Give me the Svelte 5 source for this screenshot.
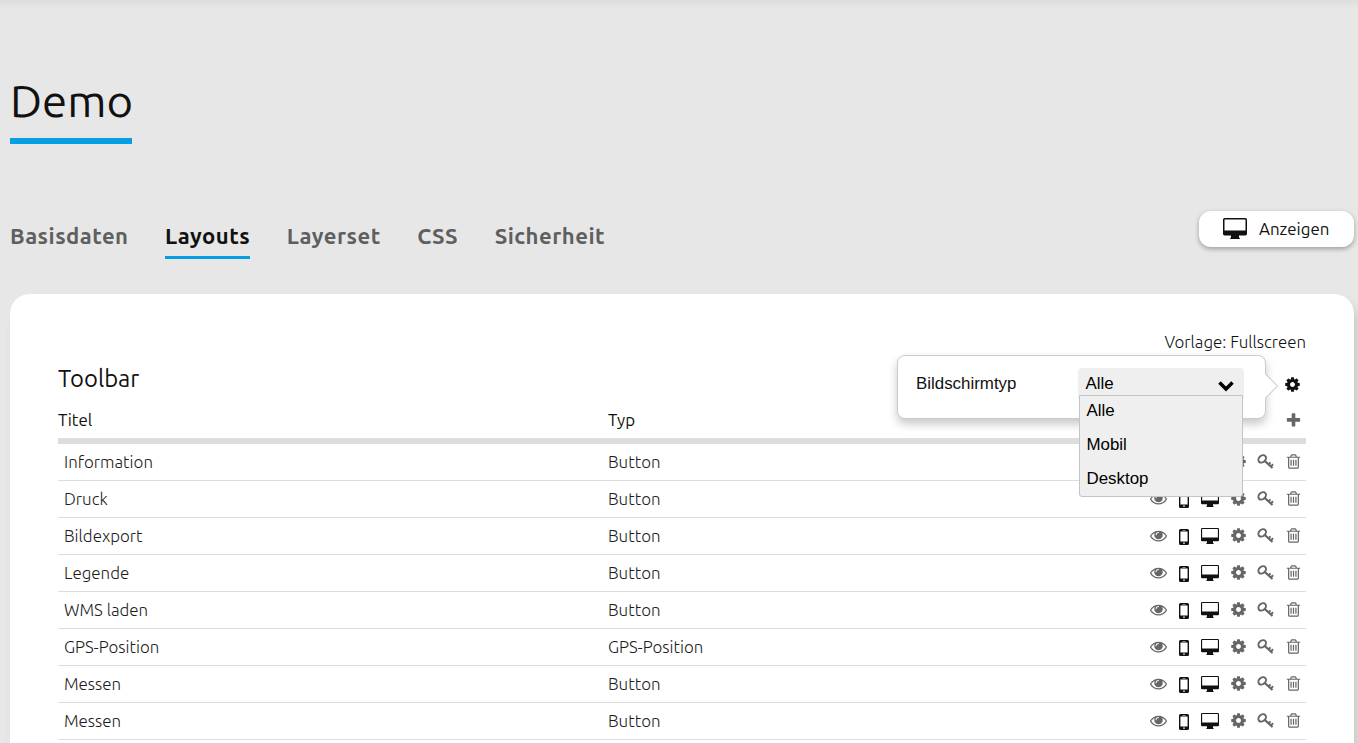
<script>
  const tabs = [
    { label: 'Basisdaten' },
    { label: 'Layouts', active: true },
    { label: 'Layerset' },
    { label: 'CSS' },
    { label: 'Sicherheit' }
  ];
  const rows = [
    ['Information', 'Button'],
    ['Druck', 'Button'],
    ['Bildexport', 'Button'],
    ['Legende', 'Button'],
    ['WMS laden', 'Button'],
    ['GPS-Position', 'GPS-Position'],
    ['Messen', 'Button'],
    ['Messen', 'Button']
  ];
  const options = ['Alle', 'Mobil', 'Desktop'];
  const cog = 'M1152 896q0-106-75-181t-181-75-181 75-75 181 75 181 181 75 181-75 75-181zm512-109v222q0 12-8 23t-20 13l-185 28q-19 54-39 91 35 50 107 138 10 12 10 25t-9 23q-27 37-99 108t-94 71q-12 0-26-9l-138-108q-44 23-91 38-16 136-29 186-7 28-36 28h-222q-14 0-24.5-8.5t-11.5-21.5l-28-184q-49-16-90-37l-141 107q-10 9-25 9-14 0-25-11-126-114-165-168-7-10-7-23 0-12 8-23 15-21 51-66.5t54-70.5q-27-50-41-99l-183-27q-13-2-21-12.5t-8-23.5v-222q0-12 8-23t19-13l186-28q14-46 39-92-40-57-107-138-10-12-10-24 0-10 9-23 26-36 98.5-107.5t94.5-71.5q13 0 26 10l138 107q44-23 91-38 16-136 29-186 7-28 36-28h222q14 0 24.5 8.5t11.5 21.5l28 184q49 16 90 37l142-107q9-9 24-9 13 0 25 10 129 119 165 170 7 8 7 22 0 12-8 23-15 21-51 66.5t-54 70.5q26 50 41 98l183 28q13 2 21 12.5t8 23.5z';
  const eye = 'M1664 960q-152-236-381-353 61 104 61 225 0 185-131.5 316.5t-316.5 131.5-316.5-131.5-131.5-316.5q0-121 61-225-229 117-381 353 133 205 333.5 326.5t434.5 121.5 434.5-121.5 333.5-326.5zm-720-384q0-20-14-34t-34-14q-125 0-214.5 89.5t-89.5 214.5q0 20 14 34t34 14 34-14 14-34q0-86 61-147t147-61q20 0 34-14t14-34zm848 384q0 34-20 69-140 230-376.5 368.5t-499.5 138.5-499.5-139-376.5-368q-20-35-20-69t20-69q140-229 376.5-368t499.5-139 499.5 139 376.5 368q20 35 20 69z';
  const trash = 'M704 736v576q0 14-9 23t-23 9h-64q-14 0-23-9t-9-23v-576q0-14 9-23t23-9h64q14 0 23 9t9 23zm256 0v576q0 14-9 23t-23 9h-64q-14 0-23-9t-9-23v-576q0-14 9-23t23-9h64q14 0 23 9t9 23zm256 0v576q0 14-9 23t-23 9h-64q-14 0-23-9t-9-23v-576q0-14 9-23t23-9h64q14 0 23 9t9 23zm128 724v-948h-896v948q0 22 7 40.5t14.5 27 10.5 8.5h832q3 0 10.5-8.5t14.5-27 7-40.5zm-672-1076h448l-48-117q-7-9-17-11h-317q-10 2-17 11zm928 32v64q0 14-9 23t-23 9h-96v948q0 83-47 143.5t-113 60.5h-832q-66 0-113-58.5t-47-141.5v-952h-96q-14 0-23-9t-9-23v-64q0-14 9-23t23-9h309l70-167q15-37 54-63t79-26h320q40 0 79 26t54 63l70 167h309q14 0 23 9t9 23z';
  const plus = 'M1600 736v192q0 40-28 68t-68 28h-416v416q0 40-28 68t-68 28h-192q-40 0-68-28t-28-68v-416h-416q-40 0-68-28t-28-68v-192q0-40 28-68t68-28h416v-416q0-40 28-68t68-28h192q40 0 68 28t28 68v416h416q40 0 68 28t28 68z';
</script>

{#snippet glyph(d)}
  <svg width="17" height="17" viewBox="0 0 1792 1792" fill="currentColor"><path {d} /></svg>
{/snippet}

{#snippet monitor(w, h)}
  <svg width={w} height={h} viewBox="0 0 24 20" preserveAspectRatio="none" fill="#111">
    <path fill-rule="evenodd" d="M1.500 0h21Q24 0 24 1.500v13.600q0 1.500-1.500 1.500H16v1.900l.8.6v.9H7.200v-.9l.8-.6v-1.900H1.500Q0 16.600 0 15.100V1.500Q0 0 1.500 0zM1.500 1.400V12h21V1.400z" />
  </svg>
{/snippet}

<main>
  <h1>Demo</h1>
  <div class="bar">
    <nav>
      {#each tabs as t}
        <a class:active={t.active}>{t.label}</a>
      {/each}
    </nav>
    <button class="show">{@render monitor(24, 21)}<span>Anzeigen</span></button>
  </div>

  <section class="card">
    <div class="template">Vorlage: Fullscreen</div>
    <div class="heading">
      <h2>Toolbar</h2>
      <span class="settings">{@render glyph(cog)}</span>
      <div class="popover">
        <label for="screen">Bildschirmtyp</label>
        <div class="select" id="screen">
          <span>Alle</span>
          <svg width="16" height="11" viewBox="0 0 16 11" fill="none" stroke="#000" stroke-width="3.500"><path d="M1.500 1.500 8 8l6.500-6.500" /></svg>
          <ul>
            {#each options as o}<li>{o}</li>{/each}
          </ul>
        </div>
        <svg class="arrow" width="14" height="28" viewBox="0 0 14 28"><path d="M0 1.500 12.500 14 0 26.500" fill="#fff" stroke="#bbb" /></svg>
      </div>
    </div>
    <div class="thead">
      <span>Titel</span><span>Typ</span>
      <span class="add">{@render glyph(plus)}</span>
    </div>
    {#each rows as r}
      <div class="row">
        <span class="title">{r[0]}</span>
        <span>{r[1]}</span>
        <div class="icons">
          <i>{@render glyph(eye)}</i>
          <i class="phone">
            <svg width="10" height="16" viewBox="0 0 10 16" fill="#111"><path fill-rule="evenodd" d="M1.500 0h7Q10 0 10 1.500v13q0 1.500-1.500 1.500h-7Q0 16 0 14.500v-13Q0 0 1.500 0zM1.400 2.600v9.800h7.200V2.600zM3.500 1v.6h3V1zM4.200 13.500v1.300h1.600v-1.300z" /></svg>
          </i>
          <i>{@render monitor(18, 16)}</i>
          <i>{@render glyph(cog)}</i>
          <i>
            <svg width="17" height="15" viewBox="0 0 17 15" fill="none" stroke="currentColor">
              <ellipse cx="5.200" cy="4.900" rx="4.200" ry="3.200" transform="rotate(-42 5.200 4.900)" stroke-width="2" />
              <path d="M7.500 6.800 15.500 14" stroke-width="2.200" />
              <path d="M11.300 10.600 13.500 8.300M13.700 12.600 16.100 10.300" stroke-width="1.900" />
            </svg>
          </i>
          <i class="last">{@render glyph(trash)}</i>
        </div>
      </div>
    {/each}
  </section>
</main>

<style>
  :global(body) { background: #e7e7e7; overflow: hidden; }
  :global(#app) { height: 743px; overflow: hidden; }
  * { box-sizing: border-box; }
  main {
    height: 743px;
    padding: 76px 4px 0 10px;
    color: #111;
    font: 16.9px/24px Ubuntu, "Noto Sans", "Open Sans", sans-serif;
    background: linear-gradient(#dedede, #e7e7e7 9px);
    overflow: hidden;
  }
  svg { display: block; flex: none; }
  h1 {
    width: 122px;
    height: 68px;
    margin: 0;
    border-bottom: 6px solid #069fe3;
    font-size: 45.5px;
    font-weight: 400;
    line-height: 50px;
    white-space: nowrap;
  }
  .bar {
    display: flex;
    justify-content: space-between;
    height: 150px;
    padding-top: 67px;
  }
  nav { display: flex; gap: 36.5px; padding-top: 10px; }
  nav a {
    height: 38px;
    color: #5f5f5f;
    font-size: 22.1px;
    font-weight: 700;
    line-height: 30px;
    letter-spacing: 0.48px;
    white-space: nowrap;
  }
  nav a.active { color: #111; border-bottom: 3px solid #069fe3; }
  .show {
    display: flex;
    align-items: center;
    gap: 12px;
    width: 155px;
    height: 36px;
    padding: 0 0 0 24px;
    border: 0;
    border-radius: 12px;
    background: #fff;
    box-shadow: 0 2px 5px rgba(0, 0, 0, 0.32);
    color: #111;
    font: inherit;
  }
  .show svg { margin-top: -2px; }
  .card {
    height: 600px;
    padding: 36px 48px 0;
    border-radius: 20px;
    background: #fff;
    box-shadow: 6px 10px 12px rgba(0, 0, 0, 0.12);
  }
  .template { text-align: right; font-weight: 300; }
  .heading {
    position: relative;
    display: flex;
    justify-content: space-between;
    height: 54px;
  }
  h2 { margin: 8px 0 0; font-size: 23.8px; line-height: 33px; font-weight: 400; }
  .settings { padding: 21.5px 5px 0 0; color: #111; }
  .popover {
    position: absolute;
    z-index: 2;
    top: 1px;
    right: 40px;
    display: flex;
    justify-content: space-between;
    width: 369px;
    height: 64px;
    padding: 12px 21px 0 18px;
    border: 1px solid #ccc;
    border-radius: 8px;
    background: #fff;
    box-shadow: 0 5px 10px rgba(0, 0, 0, 0.22);
    font: 16.9px/31px "Liberation Sans", Arial, sans-serif;
  }
  .arrow { position: absolute; top: 16px; right: -14px; }
  .select {
    position: relative;
    display: flex;
    justify-content: space-between;
    width: 166px;
    height: 32px;
    padding: 0 10px 0 7.5px;
    border-radius: 4px;
    background: #efefef;
    color: #000;
  }
  .select > svg { margin-top: 13px; }
  ul {
    position: absolute;
    top: 27px;
    left: 1px;
    width: 164px;
    height: 102px;
    margin: 0;
    padding: 0 6.5px;
    border: 1px solid #c4c4c4;
    border-radius: 0 0 3px 3px;
    background: #efefef;
    list-style: none;
  }
  li { height: 34px; line-height: 30px; }
  .thead, .row { display: grid; grid-template-columns: 550px 1fr auto; }
  .thead { height: 36px; border-bottom: 6px solid #ddd; line-height: 24px; }
  .add { padding: 3.5px 4px 0 0; color: #666; }
  .row {
    align-items: center;
    height: 37px;
    border-bottom: 1px solid #ddd;
    color: #1c1c1c;
    font-weight: 300;
  }
  .title { padding-left: 6px; }
  .icons {
    display: grid;
    grid-template-columns: 26px 26px 26px 30px 25px 28px;
    align-items: center;
    padding-bottom: 1px;
    color: #666;
  }
  .icons i { display: flex; justify-content: center; }
  .icons .phone { padding-top: 2px; }
  .icons .last { padding-left: 2px; }
</style>
